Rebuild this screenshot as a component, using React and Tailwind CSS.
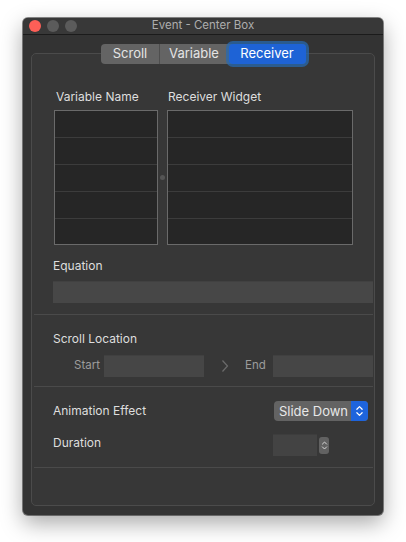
import React from 'react';

const font = { fontFamily: 'Inter, "Liberation Sans", sans-serif' };

const TableBox = ({ width }) => (
  <div className={`${width} h-[135px] border border-[#6a6a6a] bg-[#262626] flex flex-col`}>
    {[0, 1, 2, 3].map((i) => (
      <div key={i} className="h-[27px] border-b border-[#3c3c3c]" />
    ))}
    <div className="flex-1" />
  </div>
);

const Separator = () => <div className="h-px bg-[#4a4a4a] ml-[2px] mr-[1px]" />;

const UpDown = ({ className }) => (
  <svg viewBox="0 0 10 16" className={className} fill="none" stroke="currentColor" strokeWidth="1.4" strokeLinecap="round" strokeLinejoin="round">
    <polyline points="2,6 5,3 8,6" />
    <polyline points="2,10 5,13 8,10" />
  </svg>
);

export default function App() {
  return (
    <div className="w-[406px] h-[542px] bg-white pt-[18px] pl-[23px]" style={font}>
      <div className="w-[360px] h-[497px] rounded-[5px] bg-[#333333] flex flex-col shadow-[0_8px_22px_rgba(0,0,0,0.35),0_0_0_1px_rgba(0,0,0,0.45)] overflow-hidden">
        {/* title bar */}
        <div className="relative h-[17px] bg-[#383838] border-b border-[#1b1b1b] flex items-center">
          <div className="flex items-center gap-[6px] pl-[6px]">
            <span className="w-[12px] h-[12px] rounded-full bg-[#fd5f57]" />
            <span className="w-[12px] h-[12px] rounded-full bg-[#5b5b5b]" />
            <span className="w-[12px] h-[12px] rounded-full bg-[#5b5b5b]" />
          </div>
          <div className="absolute inset-0 flex items-center justify-center text-[11.5px] text-[#adadad]">
            Event - Center Box
          </div>
        </div>

        {/* tab box */}
        <div className="flex-1 flex flex-col pt-[18px] px-[8px] pb-[9px]">
          <div className="flex-1 border border-[#4b4b4b] rounded-[5px] bg-[#373737] flex flex-col">
            {/* segmented control */}
            <div className="-mt-[10px] flex justify-center">
              <div className="flex h-[20px] rounded-[4px] bg-[#646464] text-[13px] text-[#e4e4e4] pl-[1px]">
                <div className="w-[58px] flex items-center justify-center border-r border-[#4e4e4e]">Scroll</div>
                <div className="w-[69px] flex items-center justify-center">Variable</div>
                <div className="w-[77px] flex items-center justify-center rounded-[4px] bg-[#1e63d6] text-white shadow-[0_0_0_3px_rgba(40,105,175,0.75)]">
                  Receiver
                </div>
              </div>
            </div>

            {/* variable / receiver tables */}
            <div className="mt-[25px] pl-[22px] flex text-[12px] leading-[16px] text-[#dedede]">
              <div className="w-[104px] pl-[2px]">Variable Name</div>
              <div className="ml-[9px] pl-[1px]">Receiver Widget</div>
            </div>
            <div className="mt-[5px] pl-[22px] flex items-center">
              <TableBox width="w-[104px]" />
              <div className="w-[9px] flex justify-center">
                <span className="w-[5px] h-[5px] rounded-full bg-[#555555]" />
              </div>
              <TableBox width="w-[186px]" />
            </div>

            {/* equation */}
            <div className="mt-[13px] pl-[21px] text-[12px] leading-[16px] text-[#dedede]">Equation</div>
            <div className="mt-[7px] ml-[21px] mr-[1px] h-[22px] bg-[#474747] border-t border-[#414141]" />
            <div className="mt-[11px]"><Separator /></div>

            {/* scroll location */}
            <div className="mt-[16px] pl-[21px] text-[12px] leading-[16px] text-[#dedede]">Scroll Location</div>
            <div className="mt-[8px] flex items-center text-[11.5px] text-[#9c9c9c]">
              <div className="w-[72px] text-right pr-[4px]">Start</div>
              <div className="w-[100px] h-[22px] bg-[#464646] border-t border-[#404040]" />
              <div className="w-[41px] flex justify-center">
                <svg viewBox="0 0 8 14" className="w-[8px] h-[14px] text-[#6c6c6c]" fill="none" stroke="currentColor" strokeWidth="1.2">
                  <polyline points="1.5,1.5 6.5,7 1.5,12.5" />
                </svg>
              </div>
              <div className="w-[28px]">End</div>
              <div className="flex-1 mr-[1px] h-[22px] bg-[#464646] border-t border-[#404040]" />
            </div>
            <div className="mt-[9px]"><Separator /></div>

            {/* animation effect */}
            <div className="mt-[14px] flex items-center pl-[21px] text-[12px] leading-[16px] text-[#dedede]">
              <div className="flex-1">Animation Effect</div>
              <div className="mr-[6px] w-[94px] h-[20px] rounded-[4px] bg-[#636363] flex overflow-hidden">
                <div className="flex-1 flex items-center justify-center text-[13px] text-[#e8e8e8] pl-[2px]">Slide Down</div>
                <div className="w-[17px] bg-[#1e64dc] flex items-center justify-center text-white">
                  <UpDown className="w-[9px] h-[14px]" />
                </div>
              </div>
            </div>

            {/* duration */}
            <div className="mt-[13px] flex items-start pl-[21px] text-[12px] leading-[16px] text-[#dedede]">
              <div className="flex-1 mt-[1px]">Duration</div>
              <div className="w-[44px] h-[22px] bg-[#434343] border-t border-[#3d3d3d]" />
              <div className="ml-[2px] mt-[3px] mr-[45px] w-[10px] h-[17px] rounded-[3px] bg-[#626262] flex items-center justify-center text-[#d8d8d8]">
                <UpDown className="w-[7px] h-[13px]" />
              </div>
            </div>
            <div className="mt-[11px]"><Separator /></div>
          </div>
        </div>
      </div>
    </div>
  );
}
